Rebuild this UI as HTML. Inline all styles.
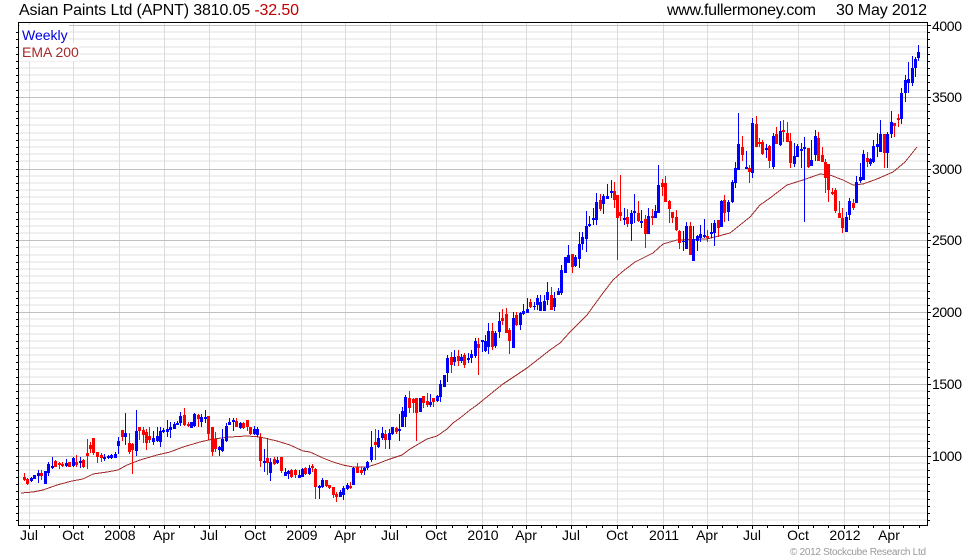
<!DOCTYPE html>
<html><head><meta charset="utf-8"><title>Asian Paints Ltd (APNT)</title>
<style>html,body{margin:0;padding:0;background:#fff;width:980px;height:560px;overflow:hidden}svg{display:block}text{font-family:"Liberation Sans",Arial,sans-serif;font-size:14px;fill:#000}</style></head>
<body>
<svg width="980" height="560" viewBox="0 0 980 560" xmlns="http://www.w3.org/2000/svg">
<rect width="980" height="560" fill="#fff"/>
<g shape-rendering="crispEdges" fill="none">
<path stroke="#f0f0f0" stroke-width="2" d="M19 32H927M19 39H927M19 47H927M19 54H927M19 61H927M19 68H927M19 75H927M19 82H927M19 90H927M19 104H927M19 111H927M19 118H927M19 125H927M19 133H927M19 140H927M19 147H927M19 154H927M19 161H927M19 176H927M19 183H927M19 190H927M19 197H927M19 204H927M19 212H927M19 219H927M19 226H927M19 233H927M19 247H927M19 255H927M19 262H927M19 269H927M19 276H927M19 283H927M19 291H927M19 298H927M19 305H927M19 319H927M19 326H927M19 334H927M19 341H927M19 348H927M19 355H927M19 362H927M19 369H927M19 377H927M19 391H927M19 398H927M19 405H927M19 413H927M19 420H927M19 427H927M19 434H927M19 441H927M19 448H927M19 463H927M19 470H927M19 477H927M19 484H927M19 491H927M19 499H927M19 506H927M19 513H927M19 520H927"/>
<path stroke="#dcdcdc" d="M29.5 23V525M73.5 23V525M119.5 23V525M164.5 23V525M209.5 23V525M255.5 23V525M301.5 23V525M345.5 23V525M390.5 23V525M436.5 23V525M482.5 23V525M526.5 23V525M571.5 23V525M617.5 23V525M663.5 23V525M707.5 23V525M752.5 23V525M798.5 23V525M844.5 23V525M889.5 23V525"/>
<path stroke="#c0c0c0" d="M19 25.5H927M19 97.5H927M19 169.5H927M19 240.5H927M19 312.5H927M19 384.5H927M19 456.5H927"/>
<rect x="20" y="25" width="49" height="18" fill="#fff"/>
<rect x="20" y="43" width="59" height="18" fill="#fff"/>
</g>
<text x="22" y="40" style="fill:#0000e0">Weekly</text>
<text x="22" y="57" style="fill:#a52a2a">EMA 200</text>
<path fill="none" stroke="#a02c2c" stroke-width="1" shape-rendering="crispEdges" d="M21 493L33 492L43 490L57 485L72 481L83 479L93 474L107 472L118 470L127 465L140 460L157 455L170 452L183 447L200 442L213 439L230 437L247 436L260 437L277 441L290 445L303 451L310 452L323 458L333 462L343 465L353 467L367 467L377 464L387 460L402 455L410 449L427 439L437 436L447 429L453 423L460 418L470 410L477 405L493 392L503 384L527 368L550 350L560 343L570 332L587 315L603 293L613 280L622 272L635 262L653 253L663 244L677 240L707 239L730 233L740 225L750 217L760 205L770 198L787 185L803 180L820 174L830 175L843 180L853 185L863 184L877 179L893 172L905 162L913 152L917 147"/>
<g transform="translate(.5 0)" shape-rendering="crispEdges" fill="none">
<path stroke="#0000ff" stroke-width="1" d="M31 477V482M34 475V479M38 470V483M45 471V484M48 462V476M52 457V469M66 459V467M73 457V467M80 457V468M104 454V461M108 455V459M111 454V459M115 452V458M118 437V454M125 413V445M136 410V456M153 431V445M157 427V442M160 427V447M163 428V433M167 420V437M170 422V438M174 422V429M177 421V425M180 412V426M191 422V428M194 413V427M201 414V427M205 410V423M219 446V456M222 429V452M226 423V442M229 418V425M233 418V431M240 422V429M254 426V435M257 427V437M264 449V472M270 458V481M277 457V464M285 468V476M288 470V479M299 470V478M302 468V477M309 465V475M319 485V499M322 478V488M340 490V497M343 486V500M347 483V490M353 467V485M364 467V475M367 461V470M371 431V462M378 430V448M382 427V440M389 429V449M392 427V435M399 414V441M402 407V427M405 395V427M420 398V412M430 394V407M437 395V402M440 380V402M444 375V387M447 355V382M454 350V366M461 354V363M468 353V363M471 350V363M475 338V358M482 340V352M485 335V352M488 323V354M495 331V348M499 312V338M513 312V348M520 312V330M523 304V315M527 298V313M534 302V310M537 295V310M540 295V311M544 295V311M547 282V305M554 292V311M558 288V295M561 265V295M565 257V273M568 245V263M575 255V267M579 232V268M582 232V250M586 211V252M589 216V227M593 208V225M596 193V225M603 194V214M607 184V199M611 180V198M624 208V225M631 210V241M634 194V223M641 210V228M648 208V234M655 205V218M658 165V213M683 231V251M686 222V249M693 226V261M697 235V251M700 225V242M704 219V238M711 223V238M714 220V246M721 200V227M728 200V221M732 180V203M735 162V188M738 113V170M746 151V169M752 118V178M766 144V158M773 133V169M780 121V146M794 143V167M797 144V157M801 143V168M804 137V222M811 140V166M815 130V161M846 212V232M849 198V220M856 176V203M860 163V183M863 150V180M870 158V166M873 140V163M877 133V157M880 120V152M887 132V168M891 111V138M901 88V124M905 75V102M908 62V93M912 56V86M915 57V77M918 45V61"/>
<path stroke="#0000ff" stroke-width="3" d="M31 478V481M34 475V479M38 473V476M45 471V484M48 464V473M52 466V468M66 463V466M73 458V466M80 461V463M104 457V459M108 456V458M111 455V458M115 454V458M118 441V446M125 433V437M136 431V451M153 438V442M157 436V441M160 431V442M163 430V432M167 429V432M170 427V430M174 424V429M177 423V425M180 416V423M191 422V428M194 414V426M201 417V422M205 417V419M219 447V450M222 439V451M226 426V441M229 422V425M233 420V422M240 423V428M254 429V434M257 429V435M264 461V463M270 462V473M277 460V463M285 472V476M288 471V474M299 475V478M302 469V477M309 468V474M319 486V488M322 480V487M340 492V497M343 488V495M347 485V489M353 468V485M364 468V471M367 462V468M371 447V460M378 438V447M382 433V438M389 433V440M392 427V434M399 429V431M402 411V427M405 397V417M420 398V412M430 402V405M437 396V401M440 384V397M444 375V387M447 358V373M454 357V362M461 357V361M468 358V360M471 354V358M475 341V356M482 340V342M485 341V351M488 331V347M495 333V346M499 321V332M513 318V348M520 313V325M523 311V314M527 309V313M534 306V307M537 298V305M540 302V311M544 301V311M547 292V300M554 298V307M558 291V295M561 270V293M565 257V273M568 255V263M575 257V266M579 244V259M582 237V244M586 226V239M589 224V226M593 218V220M596 202V220M603 196V204M607 196V199M611 191V193M624 218V220M631 213V224M634 211V213M641 221V223M648 216V234M655 211V218M658 185V213M683 241V242M686 226V249M693 239V261M697 236V241M700 234V238M704 235V237M711 232V234M714 223V233M721 201V227M728 202V212M732 182V202M735 168V183M738 144V170M746 167V169M752 123V173M766 148V150M773 136V167M780 131V145M794 156V164M797 146V157M801 149V151M804 147V149M811 160V166M815 136V155M846 217V232M849 201V215M856 182V203M860 177V181M863 154V180M870 159V164M873 146V162M877 144V147M880 134V152M887 134V153M891 122V134M901 93V119M905 80V93M908 79V83M912 68V83M915 59V68M918 52V58"/>
<path stroke="#ff0000" stroke-width="1" d="M24 473V481M27 478V485M41 470V480M55 460V467M59 462V469M62 462V467M69 462V467M76 455V467M83 459V468M87 439V469M90 442V453M93 438V455M97 452V463M101 453V462M122 430V441M129 433V454M132 443V474M139 427V440M143 427V443M146 429V450M149 427V443M184 408V426M188 422V427M198 414V427M208 416V440M212 427V456M215 432V452M236 418V427M243 422V429M247 420V431M250 427V435M260 433V467M267 438V475M274 457V465M281 457V473M291 469V478M295 469V478M305 467V475M312 464V472M315 468V499M326 480V487M329 485V489M333 487V498M336 492V502M350 482V489M357 463V473M361 467V475M375 429V460M385 430V449M396 427V434M409 391V413M413 398V413M416 398V441M423 396V408M427 393V407M433 398V407M451 352V373M458 350V366M464 353V368M478 338V375M492 323V350M502 309V325M506 308V333M509 328V354M516 312V326M530 299V308M551 287V310M572 254V273M600 194V211M614 182V208M617 195V260M620 175V221M627 209V227M638 201V222M645 215V248M652 209V225M662 179V196M665 176V202M669 200V223M672 212V223M676 210V231M679 230V249M690 222V255M707 230V242M718 220V237M724 195V222M742 136V161M749 165V183M756 116V147M759 138V147M762 140V155M769 145V168M776 127V144M783 120V142M787 122V142M790 133V168M808 148V168M818 132V161M822 147V162M825 159V193M828 164V202M832 188V195M835 188V213M839 201V218M842 208V233M853 199V210M867 152V167M884 134V168M894 123V137M898 114V127"/>
<path stroke="#ff0000" stroke-width="3" d="M24 477V480M27 479V484M41 473V476M55 461V467M59 463V465M62 464V466M69 462V467M76 462V465M83 460V467M87 453V456M90 445V449M93 438V453M97 452V457M101 455V458M122 430V437M129 443V452M132 444V450M139 427V431M143 430V435M146 432V443M149 436V440M184 415V425M188 424V426M198 415V419M208 416V434M212 427V452M215 439V449M236 421V427M243 423V428M247 420V427M250 427V434M260 437V461M267 458V463M274 459V464M281 457V471M291 470V477M295 470V475M305 468V474M312 466V468M315 469V487M326 480V486M329 485V488M333 487V495M336 494V497M350 486V488M357 467V473M361 470V473M375 442V445M385 434V440M396 428V432M409 398V408M413 399V403M416 398V413M423 396V403M427 401V405M433 398V402M451 357V365M458 356V361M464 355V365M478 344V348M492 331V347M502 318V321M506 314V333M509 330V341M516 315V325M530 302V307M551 295V310M572 254V267M600 200V209M614 191V200M617 195V218M620 212V216M627 217V224M638 213V221M645 219V234M652 216V218M662 183V187M665 183V202M669 201V209M672 212V218M676 217V230M679 231V243M690 226V255M707 236V238M718 220V228M724 200V213M742 147V155M749 168V172M756 124V147M759 142V144M762 142V154M769 146V161M776 134V144M783 130V132M787 133V142M790 141V163M808 148V167M818 138V161M822 155V162M825 162V178M828 164V190M832 192V194M835 190V211M839 213V218M842 218V228M853 203V208M867 158V162M884 134V153M894 123V126M898 118V120"/>
</g>
<g shape-rendering="crispEdges" fill="none" stroke="#000">
<path d="M16 32.5H18M16 39.5H18M16 47.5H18M16 54.5H18M16 61.5H18M16 68.5H18M16 75.5H18M16 82.5H18M16 90.5H18M16 97.5H18M16 104.5H18M16 111.5H18M16 118.5H18M16 125.5H18M16 133.5H18M16 140.5H18M16 147.5H18M16 154.5H18M16 161.5H18M16 169.5H18M16 176.5H18M16 183.5H18M16 190.5H18M16 197.5H18M16 204.5H18M16 212.5H18M16 219.5H18M16 226.5H18M16 233.5H18M16 240.5H18M16 247.5H18M16 255.5H18M16 262.5H18M16 269.5H18M16 276.5H18M16 283.5H18M16 291.5H18M16 298.5H18M16 305.5H18M16 312.5H18M16 319.5H18M16 326.5H18M16 334.5H18M16 341.5H18M16 348.5H18M16 355.5H18M16 362.5H18M16 369.5H18M16 377.5H18M16 384.5H18M16 391.5H18M16 398.5H18M16 405.5H18M16 413.5H18M16 420.5H18M16 427.5H18M16 434.5H18M16 441.5H18M16 448.5H18M16 456.5H18M16 463.5H18M16 470.5H18M16 477.5H18M16 484.5H18M16 491.5H18M16 499.5H18M16 506.5H18M16 513.5H18M16 520.5H18"/>
<path d="M928 25.5H931M928 32.5H930M928 39.5H930M928 47.5H930M928 54.5H930M928 61.5H930M928 68.5H930M928 75.5H930M928 82.5H930M928 90.5H930M928 97.5H931M928 104.5H930M928 111.5H930M928 118.5H930M928 125.5H930M928 133.5H930M928 140.5H930M928 147.5H930M928 154.5H930M928 161.5H930M928 169.5H931M928 176.5H930M928 183.5H930M928 190.5H930M928 197.5H930M928 204.5H930M928 212.5H930M928 219.5H930M928 226.5H930M928 233.5H930M928 240.5H931M928 247.5H930M928 255.5H930M928 262.5H930M928 269.5H930M928 276.5H930M928 283.5H930M928 291.5H930M928 298.5H930M928 305.5H930M928 312.5H931M928 319.5H930M928 326.5H930M928 334.5H930M928 341.5H930M928 348.5H930M928 355.5H930M928 362.5H930M928 369.5H930M928 377.5H930M928 384.5H931M928 391.5H930M928 398.5H930M928 405.5H930M928 413.5H930M928 420.5H930M928 427.5H930M928 434.5H930M928 441.5H930M928 448.5H930M928 456.5H931M928 463.5H930M928 470.5H930M928 477.5H930M928 484.5H930M928 491.5H930M928 499.5H930M928 506.5H930M928 513.5H930M928 520.5H930"/>
<path d="M29.5 526V529M44.5 526V528M59.5 526V528M73.5 526V529M88.5 526V528M104.5 526V528M119.5 526V529M134.5 526V528M149.5 526V528M164.5 526V529M179.5 526V528M194.5 526V528M209.5 526V529M225.5 526V528M240.5 526V528M255.5 526V529M270.5 526V528M286.5 526V528M301.5 526V529M315.5 526V528M330.5 526V528M345.5 526V529M360.5 526V528M375.5 526V528M390.5 526V529M406.5 526V528M421.5 526V528M436.5 526V529M452.5 526V528M467.5 526V528M482.5 526V529M497.5 526V528M512.5 526V528M526.5 526V529M541.5 526V528M556.5 526V528M571.5 526V529M586.5 526V528M602.5 526V528M617.5 526V529M632.5 526V528M647.5 526V528M663.5 526V529M678.5 526V528M692.5 526V528M707.5 526V529M722.5 526V528M737.5 526V528M752.5 526V529M767.5 526V528M783.5 526V528M798.5 526V529M813.5 526V528M828.5 526V528M844.5 526V529M858.5 526V528M873.5 526V528M889.5 526V529M903.5 526V528M919.5 526V528"/>
<path stroke-width="1" d="M18.5 22.5H927.5V525.5H18.5Z"/>
</g>
<text x="19" y="15" textLength="280" style="font-size:16px">Asian Paints Ltd (APNT) 3810.05 <tspan style="fill:#c00000">-32.50</tspan></text>
<text x="667" y="15" textLength="149" style="font-size:16px">www.fullermoney.com</text>
<text x="836" y="15" textLength="91" style="font-size:16px">30 May 2012</text>
<text x="932" y="31" textLength="30">4000</text><text x="932" y="102" textLength="30">3500</text><text x="932" y="174" textLength="30">3000</text><text x="932" y="245" textLength="30">2500</text><text x="932" y="317" textLength="30">2000</text><text x="932" y="389" textLength="30">1500</text><text x="932" y="461" textLength="30">1000</text>
<g text-anchor="middle">
<text x="29" y="540">Jul</text><text x="73" y="540">Oct</text><text x="120" y="540">2008</text><text x="164" y="540">Apr</text><text x="209" y="540">Jul</text><text x="255" y="540">Oct</text><text x="302" y="540">2009</text><text x="345" y="540">Apr</text><text x="390" y="540">Jul</text><text x="436" y="540">Oct</text><text x="483" y="540">2010</text><text x="526" y="540">Apr</text><text x="571" y="540">Jul</text><text x="617" y="540">Oct</text><text x="664" y="540">2011</text><text x="707" y="540">Apr</text><text x="752" y="540">Jul</text><text x="798" y="540">Oct</text><text x="845" y="540">2012</text><text x="889" y="540">Apr</text>
</g>
<text x="790" y="555" textLength="136" lengthAdjust="spacing" style="font-size:10px;fill:#999">© 2012 Stockcube Research Ltd</text>
</svg>
</body></html>
